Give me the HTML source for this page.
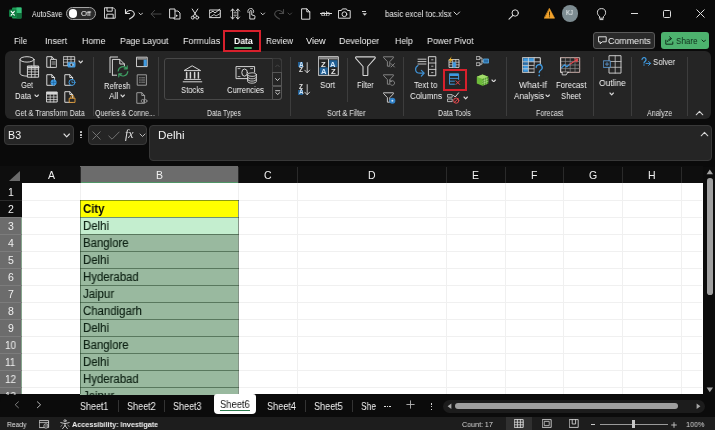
<!DOCTYPE html>
<html><head><meta charset="utf-8"><title>basic excel toc.xlsx - Excel</title>
<style>
html,body{margin:0;padding:0;background:#0a0a0a;}
body{width:715px;height:430px;position:relative;overflow:hidden;font-family:"Liberation Sans",Arial,sans-serif;}
.t{position:absolute;white-space:nowrap;display:block;transform-origin:0 50%;will-change:transform;}
.r{position:absolute;display:block;box-sizing:border-box;}
</style></head><body>
<svg class="r" style="left:9px;top:7px;" width="13" height="12" viewBox="0 0 13 12" fill="none" stroke-linecap="round" stroke-linejoin="round"><rect x="3" y="0.5" width="9.5" height="11" rx="1" fill="#1e9e57"/><rect x="7.5" y="0.5" width="5" height="5.5" fill="#35c27a"/><rect x="7.5" y="6" width="5" height="5.5" fill="#12703c"/><rect x="0" y="2.5" width="7.5" height="7.5" rx="1" fill="#107c41"/><path d="M2.2 4.3 L5.3 8.2 M5.3 4.3 L2.2 8.2" stroke="#fff" stroke-width="1.1"/></svg>
<span class="t" style="left:31.5px;top:7.9px;font-size:8.5px;line-height:12.5px;color:#f2f2f2;transform:scaleX(0.819);">AutoSave</span>
<div class="r" style="left:66px;top:6.8px;width:30.2px;height:13.4px;background:#2a2a2a;border:1.2px solid #a4a4a4;border-radius:7px;"></div>
<div class="r" style="left:68.5px;top:9.3px;width:8.4px;height:8.4px;background:#ffffff;border-radius:50%;"></div>
<span class="t" style="left:80.6px;top:7.9px;font-size:8px;line-height:12px;color:#ffffff;transform:scaleX(0.931);">Off</span>
<svg class="r" style="left:103.6px;top:7.4px;" width="12" height="12" viewBox="0 0 12 12" fill="none" stroke-linecap="round" stroke-linejoin="round"><path d="M0.8 0.8 h8.6 l1.8 1.8 v8.6 h-10.4 z" stroke="#dcdcdc" stroke-width="1"/><path d="M3 0.8 v3.4 h5.2 v-3.4 M2.8 11.2 v-4 h6.4 v4" stroke="#dcdcdc" stroke-width="1"/></svg>
<svg class="r" style="left:123.5px;top:7.5px;" width="12" height="12" viewBox="0 0 12 12" fill="none" stroke-linecap="round" stroke-linejoin="round"><path d="M1.5 1.5 v4 h4" stroke="#dcdcdc" stroke-width="1.1"/><path d="M1.8 5.2 C3.5 2.2 7.5 1.6 9.6 4 C11.6 6.4 9.5 9 5.5 11" stroke="#dcdcdc" stroke-width="1.1"/></svg>
<svg class="r" style="left:137.5px;top:11.7px;" width="5.6" height="3.8" viewBox="0 0 5.6 3.8" fill="none" stroke-linecap="round" stroke-linejoin="round"><path d="M1 1 L2.8 2.8 L4.6 1" stroke="#d0d0d0" stroke-width="1"/></svg>
<svg class="r" style="left:149.5px;top:8.5px;" width="12" height="10" viewBox="0 0 12 10" fill="none" stroke-linecap="round" stroke-linejoin="round"><path d="M11 5 H1.2 M4.6 1.4 L1.2 5 L4.6 8.6" stroke="#484848" stroke-width="1"/></svg>
<svg class="r" style="left:169px;top:7.5px;" width="12" height="12" viewBox="0 0 12 12" fill="none" stroke-linecap="round" stroke-linejoin="round"><path d="M1 1 h5 v9 h-5 z" stroke="#dcdcdc" stroke-width="1"/><path d="M6 3 h3 l2 2 v6 h-6 v-1" stroke="#dcdcdc" stroke-width="1"/><path d="M7 6.5 l2 1.3 -2 1.3z" fill="#dcdcdc"/></svg>
<svg class="r" style="left:190px;top:7.5px;" width="10" height="12" viewBox="0 0 10 12" fill="none" stroke-linecap="round" stroke-linejoin="round"><path d="M2.2 1 L6.6 8 M7.8 1 L3.4 8" stroke="#dcdcdc" stroke-width="1"/><circle cx="2.8" cy="9.6" r="1.5" stroke="#dcdcdc" stroke-width="1"/><circle cx="7.2" cy="9.6" r="1.5" stroke="#dcdcdc" stroke-width="1"/></svg>
<svg class="r" style="left:208.5px;top:8px;" width="12" height="11" viewBox="0 0 12 11" fill="none" stroke-linecap="round" stroke-linejoin="round"><rect x="0.7" y="2" width="10.6" height="7.6" stroke="#dcdcdc" stroke-width="1"/><path d="M1 5 L4 3.2 L6 5 L10.8 1.2" stroke="#dcdcdc" stroke-width="1"/><path d="M1.2 9 L5 6.5 L7 8 L11 5.6" stroke="#dcdcdc" stroke-width="0.8"/></svg>
<svg class="r" style="left:230px;top:7.5px;" width="10.5" height="12" viewBox="0 0 10.5 12" fill="none" stroke-linecap="round" stroke-linejoin="round"><path d="M2.6 1 v10 M0.8 9 l1.8 2 1.8-2 M0.8 3 l1.8-2 1.8 2" stroke="#dcdcdc" stroke-width="0.95"/><path d="M7.8 1 v10 M6 9 l1.8 2 1.8-2 M6 3 l1.8-2 1.8 2" stroke="#dcdcdc" stroke-width="0.95"/><path d="M4 4.8 h2.4 M4 7.2 h2.4" stroke="#dcdcdc" stroke-width="0.85"/></svg>
<svg class="r" style="left:245.6px;top:7.5px;" width="10" height="12" viewBox="0 0 10 12" fill="none" stroke-linecap="round" stroke-linejoin="round"><path d="M3.8 10.5 V3.6 a1 1 0 0 1 2 0 V7 l2.4 0.5 a1 1 0 0 1 0.8 1.2 l-0.4 2.3 h-4.4 z" stroke="#dcdcdc" stroke-width="1"/><path d="M2 4.6 a3 3 0 1 1 5.6 -0.2" stroke="#dcdcdc" stroke-width="0.9"/></svg>
<svg class="r" style="left:260.4px;top:11.7px;" width="5.6" height="3.8" viewBox="0 0 5.6 3.8" fill="none" stroke-linecap="round" stroke-linejoin="round"><path d="M1 1 L2.8 2.8 L4.6 1" stroke="#d0d0d0" stroke-width="1"/></svg>
<svg class="r" style="left:273px;top:7.5px;" width="12" height="12" viewBox="0 0 12 12" fill="none" stroke-linecap="round" stroke-linejoin="round"><path d="M10.5 1.5 v4 h-4" stroke="#4a4a4a" stroke-width="1.1"/><path d="M10.2 5.2 C8.5 2.2 4.5 1.6 2.4 4 C0.4 6.4 2.5 9 6.5 11" stroke="#4a4a4a" stroke-width="1.1"/></svg>
<svg class="r" style="left:287.2px;top:11.7px;" width="5.6" height="3.8" viewBox="0 0 5.6 3.8" fill="none" stroke-linecap="round" stroke-linejoin="round"><path d="M1 1 L2.8 2.8 L4.6 1" stroke="#4a4a4a" stroke-width="1"/></svg>
<svg class="r" style="left:300.6px;top:7.5px;" width="10" height="12" viewBox="0 0 10 12" fill="none" stroke-linecap="round" stroke-linejoin="round"><path d="M1 0.8 h4.8 l3 3 v7.4 h-7.8 z M5.8 0.8 v3 h3" stroke="#dcdcdc" stroke-width="1"/></svg>
<span class="t" style="left:321.0px;top:7.5px;font-size:8px;line-height:12px;color:#dcdcdc;transform:scaleX(1.012);">ab</span>
<div class="r" style="left:319.5px;top:13.2px;width:12.5px;height:1px;background:#dcdcdc;"></div>
<svg class="r" style="left:338px;top:8px;" width="13" height="11" viewBox="0 0 13 11" fill="none" stroke-linecap="round" stroke-linejoin="round"><path d="M0.8 2.5 h2.6 l1-1.6 h4 l1 1.6 h2.8 v7.7 h-11.4 z" stroke="#dcdcdc" stroke-width="1"/><circle cx="6.4" cy="6.2" r="2.4" stroke="#dcdcdc" stroke-width="1"/></svg>
<div class="r" style="left:361.8px;top:11.2px;width:4.6px;height:1px;background:#d0d0d0;"></div>
<svg class="r" style="left:361.5px;top:13.2px;" width="6" height="3.2" viewBox="0 0 6 3.2" fill="none" stroke-linecap="round" stroke-linejoin="round"><path d="M0.4 0.2 h4.6 l-2.3 2.6z" fill="#d0d0d0"/></svg>
<span class="t" style="left:384.5px;top:7.9px;font-size:8.8px;line-height:12.8px;color:#efefef;transform:scaleX(0.883);">basic excel toc.xlsx</span>
<svg class="r" style="left:453.4px;top:11.4px;" width="7.6" height="4.8" viewBox="0 0 7.6 4.8" fill="none" stroke-linecap="round" stroke-linejoin="round"><path d="M1 1 L3.8 3.8 L6.6 1" stroke="#d8d8d8" stroke-width="1"/></svg>
<svg class="r" style="left:507.5px;top:8.5px;" width="12" height="11" viewBox="0 0 12 11" fill="none" stroke-linecap="round" stroke-linejoin="round"><circle cx="7.2" cy="4" r="3.2" stroke="#dcdcdc" stroke-width="1"/><path d="M4.9 6.4 L1 10.2" stroke="#dcdcdc" stroke-width="1.1"/></svg>
<svg class="r" style="left:543.5px;top:8px;" width="11" height="11" viewBox="0 0 11 11" fill="none" stroke-linecap="round" stroke-linejoin="round"><path d="M5.5 0.6 L10.6 10.2 H0.4 Z" fill="#f2a22b" stroke="#f2a22b" stroke-width="0.6"/><path d="M5.5 4 v3.2" stroke="#3a2a00" stroke-width="1"/><circle cx="5.5" cy="8.7" r="0.55" fill="#3a2a00"/></svg>
<div class="r" style="left:561.5px;top:5.3px;width:16.5px;height:16.5px;background:#7d8c91;border-radius:50%;"></div>
<span class="t" style="left:566.4px;top:8.4px;font-size:6.8px;line-height:10.8px;color:#f4f8f8;transform:scaleX(0.882);">KJ</span>
<svg class="r" style="left:596px;top:7.5px;" width="11" height="13" viewBox="0 0 11 13" fill="none" stroke-linecap="round" stroke-linejoin="round"><path d="M3.6 8.6 C2.2 7.4 1.4 6.2 1.4 4.7 a4.1 4.1 0 0 1 8.2 0 C9.6 6.2 8.8 7.4 7.4 8.6 v1.6 h-3.8 z M4 11.6 h3" stroke="#dcdcdc" stroke-width="1"/></svg>
<div class="r" style="left:630.5px;top:13px;width:7.5px;height:1px;background:#dcdcdc;"></div>
<div class="r" style="left:663px;top:9.8px;width:8px;height:8px;background:transparent;border:1px solid #dcdcdc;border-radius:1.5px;"></div>
<svg class="r" style="left:695.5px;top:9.3px;" width="9" height="9" viewBox="0 0 9 9" fill="none" stroke-linecap="round" stroke-linejoin="round"><path d="M0.8 0.8 L8.2 8.2 M8.2 0.8 L0.8 8.2" stroke="#dcdcdc" stroke-width="1"/></svg>
<span class="t" style="left:14.0px;top:35.1px;font-size:9.2px;line-height:13.2px;color:#f2f2f2;transform:scaleX(0.890);">File</span>
<span class="t" style="left:45.3px;top:35.1px;font-size:9.2px;line-height:13.2px;color:#f2f2f2;transform:scaleX(0.965);">Insert</span>
<span class="t" style="left:82.4px;top:35.1px;font-size:9.2px;line-height:13.2px;color:#f2f2f2;transform:scaleX(0.954);">Home</span>
<span class="t" style="left:120.4px;top:35.1px;font-size:9.2px;line-height:13.2px;color:#f2f2f2;transform:scaleX(0.937);">Page Layout</span>
<span class="t" style="left:183.0px;top:35.1px;font-size:9.2px;line-height:13.2px;color:#f2f2f2;transform:scaleX(0.973);">Formulas</span>
<span class="t" style="left:233.7px;top:35.1px;font-size:9.2px;line-height:13.2px;color:#ffffff;transform:scaleX(0.943);font-weight:bold;">Data</span>
<div class="r" style="left:233.7px;top:47.3px;width:18.8px;height:1.4px;background:#4db26e;border-radius:1px;"></div>
<span class="t" style="left:265.6px;top:35.1px;font-size:9.2px;line-height:13.2px;color:#f2f2f2;transform:scaleX(0.895);">Review</span>
<span class="t" style="left:306.0px;top:35.1px;font-size:9.2px;line-height:13.2px;color:#f2f2f2;transform:scaleX(0.991);">View</span>
<span class="t" style="left:339.2px;top:35.1px;font-size:9.2px;line-height:13.2px;color:#f2f2f2;transform:scaleX(0.963);">Developer</span>
<span class="t" style="left:394.5px;top:35.1px;font-size:9.2px;line-height:13.2px;color:#f2f2f2;transform:scaleX(0.946);">Help</span>
<span class="t" style="left:426.7px;top:35.1px;font-size:9.2px;line-height:13.2px;color:#f2f2f2;transform:scaleX(0.951);">Power Pivot</span>
<div class="r" style="left:593.4px;top:31.8px;width:61.6px;height:17px;background:#2a2a2a;border:1px solid #5a5a5a;border-radius:3px;"></div>
<svg class="r" style="left:597.5px;top:36px;" width="9" height="9" viewBox="0 0 9 9" fill="none" stroke-linecap="round" stroke-linejoin="round"><path d="M0.8 0.8 h7.4 v5 h-4 l-2 2 v-2 h-1.4 z" stroke="#e0e0e0" stroke-width="1"/></svg>
<span class="t" style="left:608.2px;top:34.8px;font-size:9.2px;line-height:13.2px;color:#f2f2f2;transform:scaleX(0.962);">Comments</span>
<div class="r" style="left:660.7px;top:31.8px;width:48.3px;height:17px;background:#4db26e;border-radius:3px;"></div>
<svg class="r" style="left:664.5px;top:35.5px;" width="9" height="9" viewBox="0 0 9 9" fill="none" stroke-linecap="round" stroke-linejoin="round"><path d="M0.8 4.2 v4 h7 v-2.2" stroke="#10301c" stroke-width="1"/><path d="M2.6 5.6 C3 3.4 4.6 2.6 6 2.6 M4.6 0.8 L6.6 2.6 L4.6 4.4" stroke="#10301c" stroke-width="1"/></svg>
<span class="t" style="left:675.8px;top:34.8px;font-size:9.2px;line-height:13.2px;color:#0f2a19;transform:scaleX(0.876);">Share</span>
<svg class="r" style="left:700.7px;top:38.9px;" width="5.6" height="3.8" viewBox="0 0 5.6 3.8" fill="none" stroke-linecap="round" stroke-linejoin="round"><path d="M1 1 L2.8 2.8 L4.6 1" stroke="#0f2a19" stroke-width="1"/></svg>
<div class="r" style="left:4.6px;top:51px;width:706px;height:68.4px;background:#252525;border-radius:6px;"></div>
<div class="r" style="left:223.3px;top:30px;width:38px;height:22px;background:transparent;border:2px solid #d7202c;"></div>
<div class="r" style="left:93.2px;top:57px;width:1px;height:59px;background:#3d3d3d;"></div>
<div class="r" style="left:158px;top:57px;width:1px;height:59px;background:#3d3d3d;"></div>
<div class="r" style="left:289.8px;top:57px;width:1px;height:59px;background:#3d3d3d;"></div>
<div class="r" style="left:402.7px;top:57px;width:1px;height:59px;background:#3d3d3d;"></div>
<div class="r" style="left:505.8px;top:57px;width:1px;height:59px;background:#3d3d3d;"></div>
<div class="r" style="left:593.4px;top:57px;width:1px;height:59px;background:#3d3d3d;"></div>
<div class="r" style="left:631.2px;top:57px;width:1px;height:59px;background:#3d3d3d;"></div>
<div class="r" style="left:687.4px;top:57px;width:1px;height:59px;background:#3d3d3d;"></div>
<div class="r" style="left:346.7px;top:58px;width:1px;height:44px;background:#3d3d3d;"></div>
<span class="t" style="left:14.6px;top:107.0px;font-size:8.5px;line-height:12.5px;color:#e2e2e2;transform:scaleX(0.844);">Get &amp; Transform Data</span>
<span class="t" style="left:95.2px;top:107.0px;font-size:8.5px;line-height:12.5px;color:#e2e2e2;transform:scaleX(0.827);">Queries &amp; Conne...</span>
<span class="t" style="left:206.7px;top:107.0px;font-size:8.5px;line-height:12.5px;color:#e2e2e2;transform:scaleX(0.794);">Data Types</span>
<span class="t" style="left:326.6px;top:107.0px;font-size:8.5px;line-height:12.5px;color:#e2e2e2;transform:scaleX(0.858);">Sort &amp; Filter</span>
<span class="t" style="left:437.8px;top:107.0px;font-size:8.5px;line-height:12.5px;color:#e2e2e2;transform:scaleX(0.817);">Data Tools</span>
<span class="t" style="left:536.0px;top:107.0px;font-size:8.5px;line-height:12.5px;color:#e2e2e2;transform:scaleX(0.823);">Forecast</span>
<span class="t" style="left:646.6px;top:107.0px;font-size:8.5px;line-height:12.5px;color:#e2e2e2;transform:scaleX(0.833);">Analyze</span>
<svg class="r" style="left:695px;top:109.6px;" width="9" height="6" viewBox="0 0 9 6" fill="none" stroke-linecap="round" stroke-linejoin="round"><path d="M1.2 4.8 L4.5 1.4 L7.8 4.8" stroke="#d4d4d4" stroke-width="1.05"/></svg>
<svg class="r" style="left:18.6px;top:56px;" width="21" height="22.4" viewBox="0 0 21 22.4" fill="none" stroke-linecap="round" stroke-linejoin="round"><ellipse cx="8" cy="3.4" rx="7" ry="2.7" stroke="#d6d6d6" stroke-width="1"/><path d="M1 3.4 v14 c0 1.5 3 2.7 7 2.7 M15 3.4 v6.2" stroke="#d6d6d6" stroke-width="1"/><rect x="8.8" y="10" width="10.8" height="11.2" fill="#252525" stroke="#d6d6d6" stroke-width="1"/><path d="M8.8 13.2 h10.8 M8.8 15.9 h10.8 M8.8 18.6 h10.8 M12.4 10 v11.2 M16 10 v11.2" stroke="#d6d6d6" stroke-width="0.8"/><path d="M8.8 11.4 h10.8" stroke="#d6d6d6" stroke-width="1.6"/></svg>
<span class="t" style="left:20.6px;top:79.0px;font-size:9.2px;line-height:13.2px;color:#f2f2f2;transform:scaleX(0.809);">Get</span>
<span class="t" style="left:15.2px;top:89.9px;font-size:9.2px;line-height:13.2px;color:#f2f2f2;transform:scaleX(0.829);">Data</span>
<svg class="r" style="left:33.599999999999994px;top:93.69999999999999px;" width="5.4" height="3.8" viewBox="0 0 5.4 3.8" fill="none" stroke-linecap="round" stroke-linejoin="round"><path d="M1 1 L2.7 2.8 L4.4 1" stroke="#d8d8d8" stroke-width="1.15"/></svg>
<svg class="r" style="left:46px;top:56.4px;" width="12" height="12" viewBox="0 0 12 12" fill="none" stroke-linecap="round" stroke-linejoin="round"><path d="M1.2 0.7 h4.6 l2.8 2.8 v7.8 h-7.4 z M5.8 0.7 v2.8 h2.8" stroke="#d6d6d6" stroke-width="1"/><path d="M4.8 3.4 h5.6 v8 h-5.6z" fill="#252525" stroke="#d6d6d6" stroke-width="0.9"/><path d="M6 6 h3.2 M6 8 h3.2 " stroke="#d6d6d6" stroke-width="0.7"/></svg>
<svg class="r" style="left:46px;top:74.2px;" width="12" height="12" viewBox="0 0 12 12" fill="none" stroke-linecap="round" stroke-linejoin="round"><path d="M1.2 0.7 h4.6 l2.8 2.8 v7.8 h-7.4 z M5.8 0.7 v2.8 h2.8" stroke="#d6d6d6" stroke-width="1"/><circle cx="7.6" cy="8.4" r="3" fill="#3f9ae0"/><path d="M4.8 8.4 h5.6 M7.6 5.6 v5.6" stroke="#1b5d94" stroke-width="0.6"/></svg>
<svg class="r" style="left:45.6px;top:91.4px;" width="12" height="12" viewBox="0 0 12 12" fill="none" stroke-linecap="round" stroke-linejoin="round"><rect x="0.8" y="1" width="10.4" height="10" stroke="#d6d6d6" stroke-width="1"/><rect x="0.8" y="1" width="10.4" height="2.6" fill="#d6d6d6"/><path d="M0.8 6 h10.4 M0.8 8.6 h10.4 M4.2 3.6 v7.4 M7.8 3.6 v7.4" stroke="#d6d6d6" stroke-width="0.8"/></svg>
<svg class="r" style="left:63px;top:56.4px;" width="13" height="12" viewBox="0 0 13 12" fill="none" stroke-linecap="round" stroke-linejoin="round"><rect x="0.7" y="0.7" width="11" height="9" stroke="#d6d6d6" stroke-width="0.9"/><path d="M0.7 3.4 h11 M0.7 6.2 h11 M4.4 0.7 v9 M8 0.7 v9" stroke="#d6d6d6" stroke-width="0.7"/><rect x="4.6" y="6.2" width="7.8" height="5.2" rx="0.8" fill="#3f9ae0"/><circle cx="8.5" cy="8.8" r="1.5" fill="#252525" stroke="#cfe6fa" stroke-width="0.6"/></svg>
<svg class="r" style="left:77.5px;top:60.1px;" width="5.4" height="3.8" viewBox="0 0 5.4 3.8" fill="none" stroke-linecap="round" stroke-linejoin="round"><path d="M1 1 L2.7 2.8 L4.4 1" stroke="#d8d8d8" stroke-width="1.15"/></svg>
<svg class="r" style="left:63.6px;top:74.2px;" width="12" height="12" viewBox="0 0 12 12" fill="none" stroke-linecap="round" stroke-linejoin="round"><path d="M1.2 0.7 h4.6 l2.8 2.8 v7.8 h-7.4 z M5.8 0.7 v2.8 h2.8" stroke="#d6d6d6" stroke-width="1"/><circle cx="8" cy="8.4" r="3" fill="#252525" stroke="#3f9ae0" stroke-width="1"/><path d="M8 6.8 v1.8 h1.4" stroke="#3f9ae0" stroke-width="0.8"/></svg>
<svg class="r" style="left:63.6px;top:91.4px;" width="12" height="12" viewBox="0 0 12 12" fill="none" stroke-linecap="round" stroke-linejoin="round"><path d="M1.2 0.7 h4.6 l2.8 2.8 v7.8 h-7.4 z M5.8 0.7 v2.8 h2.8" stroke="#d6d6d6" stroke-width="1"/><rect x="5.6" y="7.2" width="5.4" height="4.2" fill="#252525" stroke="#e6a23c" stroke-width="0.9"/><path d="M6.8 7.2 v-1.4 a1.5 1.5 0 0 1 3 0 v1.4" stroke="#e6a23c" stroke-width="0.9"/></svg>
<svg class="r" style="left:108.8px;top:56px;" width="21" height="23" viewBox="0 0 21 23" fill="none" stroke-linecap="round" stroke-linejoin="round"><path d="M1 16.6 V1 h7.6" stroke="#d6d6d6" stroke-width="1"/><path d="M3.4 19.2 V3.4 h7.4 l4.6 4.6 v2 M10.8 3.4 v4.6 h4.6 M3.4 19.2 h4.2" stroke="#d6d6d6" stroke-width="1"/><path d="M9.2 15 a4.9 4.9 0 0 1 8.6 -2.6 M18.2 9.8 v3 h-3" stroke="#3f9f64" stroke-width="1.15"/><path d="M18.8 15.6 a4.9 4.9 0 0 1 -8.6 2.6 M9.8 20.8 v-3 h3" stroke="#3f9f64" stroke-width="1.15"/></svg>
<span class="t" style="left:103.8px;top:79.6px;font-size:9.2px;line-height:13.2px;color:#f2f2f2;transform:scaleX(0.820);">Refresh</span>
<span class="t" style="left:109.0px;top:89.9px;font-size:9.2px;line-height:13.2px;color:#f2f2f2;transform:scaleX(0.900);">All</span>
<svg class="r" style="left:119.8px;top:93.89999999999999px;" width="5.4" height="3.8" viewBox="0 0 5.4 3.8" fill="none" stroke-linecap="round" stroke-linejoin="round"><path d="M1 1 L2.7 2.8 L4.4 1" stroke="#d8d8d8" stroke-width="1.15"/></svg>
<svg class="r" style="left:136px;top:56.2px;" width="12" height="12" viewBox="0 0 12 12" fill="none" stroke-linecap="round" stroke-linejoin="round"><rect x="0.8" y="1.2" width="10.4" height="9.4" stroke="#d6d6d6" stroke-width="1"/><rect x="1.3" y="1.7" width="9.4" height="2" fill="#8a8a8a"/><rect x="7.6" y="3.7" width="3.1" height="6.4" fill="#3f9ae0"/></svg>
<svg class="r" style="left:136px;top:74.2px;" width="12" height="12" viewBox="0 0 12 12" fill="none" stroke-linecap="round" stroke-linejoin="round"><rect x="1.6" y="0.8" width="8.8" height="10.4" stroke="#9a9a9a" stroke-width="1"/><path d="M3.4 3.8 h1 M5.6 3.8 h3 M3.4 6 h1 M5.6 6 h3 M3.4 8.2 h1 M5.6 8.2 h3" stroke="#9a9a9a" stroke-width="0.8"/></svg>
<svg class="r" style="left:136px;top:92px;" width="12" height="12" viewBox="0 0 12 12" fill="none" stroke-linecap="round" stroke-linejoin="round"><path d="M1.2 0.7 h4.6 l2.8 2.8 v7.8 h-7.4 z M5.8 0.7 v2.8 h2.8" stroke="#9a9a9a" stroke-width="1"/><circle cx="6.8" cy="9" r="1.6" stroke="#9a9a9a" stroke-width="0.8" fill="#252525"/><circle cx="9.4" cy="9" r="1.6" stroke="#9a9a9a" stroke-width="0.8" fill="none"/></svg>
<div class="r" style="left:164.3px;top:58.2px;width:118.2px;height:41.5px;background:transparent;border:1px solid #484848;border-radius:3px;"></div>
<div class="r" style="left:272.4px;top:58.2px;width:10.1px;height:14.4px;background:transparent;border:1px solid #3a3a3a;border-radius:0 3px 0 0;"></div>
<div class="r" style="left:272.4px;top:72.4px;width:10.1px;height:14px;background:transparent;border:1px solid #555;"></div>
<div class="r" style="left:272.4px;top:85.9px;width:10.1px;height:13.8px;background:transparent;border:1px solid #555;border-radius:0 0 3px 0;"></div>
<svg class="r" style="left:275.4px;top:64px;" width="5" height="3.4" viewBox="0 0 5 3.4" fill="none" stroke-linecap="round" stroke-linejoin="round"><path d="M0.6 2.8 L2.5 0.8 L4.4 2.8" stroke="#4a4a4a" stroke-width="0.9"/></svg>
<svg class="r" style="left:275.4px;top:77.8px;" width="5" height="3.4" viewBox="0 0 5 3.4" fill="none" stroke-linecap="round" stroke-linejoin="round"><path d="M0.6 0.6 L2.5 2.6 L4.4 0.6" stroke="#dcdcdc" stroke-width="0.9"/></svg>
<svg class="r" style="left:275.2px;top:90px;" width="5.4" height="6" viewBox="0 0 5.4 6" fill="none" stroke-linecap="round" stroke-linejoin="round"><path d="M0.6 0.7 h4.2" stroke="#dcdcdc" stroke-width="0.9"/><path d="M0.8 2.6 L2.7 4.6 L4.6 2.6" stroke="#dcdcdc" stroke-width="0.9"/></svg>
<svg class="r" style="left:181.5px;top:65px;" width="21" height="18" viewBox="0 0 21 18" fill="none" stroke-linecap="round" stroke-linejoin="round"><path d="M10.5 1 L18.6 5.6 H2.4 Z" stroke="#d6d6d6" stroke-width="1"/><path d="M4.6 7.4 v5.6 M8.4 7.4 v5.6 M12.6 7.4 v5.6 M16.4 7.4 v5.6" stroke="#d6d6d6" stroke-width="1.5"/><path d="M2.6 14.4 h15.8 M1.2 16.8 h18.6" stroke="#d6d6d6" stroke-width="1"/></svg>
<span class="t" style="left:180.7px;top:84.2px;font-size:9.2px;line-height:13.2px;color:#f2f2f2;transform:scaleX(0.829);">Stocks</span>
<svg class="r" style="left:235px;top:64.5px;" width="23" height="19" viewBox="0 0 23 19" fill="none" stroke-linecap="round" stroke-linejoin="round"><path d="M12.4 13.6 H1 V1.6 h18.6 v5.4" stroke="#d6d6d6" stroke-width="1"/><ellipse cx="9.6" cy="7.6" rx="2.8" ry="3.6" stroke="#d6d6d6" stroke-width="1"/><path d="M3 3.6 h2 M3 11.6 h2 M15.6 3.6 h2" stroke="#d6d6d6" stroke-width="0.8"/><ellipse cx="17" cy="9.6" rx="4.4" ry="1.8" fill="#252525" stroke="#d6d6d6" stroke-width="0.9"/><path d="M12.6 9.6 v6.8 c0 1 2 1.8 4.4 1.8 s4.4-.8 4.4-1.8 v-6.8 M12.6 12 c0 1 2 1.8 4.4 1.8 s4.4-.8 4.4-1.8 M12.6 14.3 c0 1 2 1.8 4.4 1.8 s4.4-.8 4.4-1.8" stroke="#d6d6d6" stroke-width="0.9"/></svg>
<span class="t" style="left:226.8px;top:84.2px;font-size:9.2px;line-height:13.2px;color:#f2f2f2;transform:scaleX(0.832);">Currencies</span>
<div class="r" style="left:298.3px;top:62.0px;width:5.2px;height:5.4px;background:#215f94;"></div>
<span class="t" style="left:298.8px;top:59.7px;font-size:6.4px;line-height:10.4px;color:#d4e8fa;font-weight:bold;">A</span>
<span class="t" style="left:299.0px;top:65.4px;font-size:6.4px;line-height:10.4px;color:#e6e6e6;font-weight:bold;">Z</span>
<svg class="r" style="left:304.3px;top:61.8px;" width="6.4" height="11.6" viewBox="0 0 6.4 11.6" fill="none" stroke-linecap="round" stroke-linejoin="round"><path d="M3.2 0.6 v10 M0.8 8.2 L3.2 10.8 L5.6 8.2" stroke="#d6d6d6" stroke-width="0.9"/></svg>
<span class="t" style="left:299.0px;top:81.5px;font-size:6.4px;line-height:10.4px;color:#e6e6e6;font-weight:bold;">Z</span>
<div class="r" style="left:298.3px;top:89.5px;width:5.2px;height:5.4px;background:#215f94;"></div>
<span class="t" style="left:298.8px;top:87.2px;font-size:6.4px;line-height:10.4px;color:#d4e8fa;font-weight:bold;">A</span>
<svg class="r" style="left:304.3px;top:83.6px;" width="6.4" height="11.6" viewBox="0 0 6.4 11.6" fill="none" stroke-linecap="round" stroke-linejoin="round"><path d="M3.2 0.6 v10 M0.8 8.2 L3.2 10.8 L5.6 8.2" stroke="#d6d6d6" stroke-width="0.9"/></svg>
<svg class="r" style="left:317.6px;top:56.3px;" width="21" height="20" viewBox="0 0 21 20" fill="none" stroke-linecap="round" stroke-linejoin="round"><rect x="0.7" y="0.7" width="19.6" height="18.6" stroke="#d6d6d6" stroke-width="1"/><rect x="1.2" y="1.2" width="18.6" height="2.2" fill="#8c8c8c"/><rect x="1.6" y="11.4" width="8.2" height="7.2" fill="#215f94"/><rect x="11.2" y="4.2" width="8.2" height="7" fill="#215f94"/><path d="M10.5 3.4 v15.9" stroke="#d6d6d6" stroke-width="1"/></svg>
<span class="t" style="left:321.2px;top:58.6px;font-size:7.6px;line-height:11.6px;color:#e6e6e6;font-weight:bold;">Z</span>
<span class="t" style="left:320.6px;top:65.8px;font-size:7.6px;line-height:11.6px;color:#d4e8fa;font-weight:bold;">A</span>
<span class="t" style="left:330.2px;top:58.6px;font-size:7.6px;line-height:11.6px;color:#d4e8fa;font-weight:bold;">A</span>
<span class="t" style="left:330.8px;top:65.8px;font-size:7.6px;line-height:11.6px;color:#e6e6e6;font-weight:bold;">Z</span>
<span class="t" style="left:320.3px;top:79.0px;font-size:9.2px;line-height:13.2px;color:#f2f2f2;transform:scaleX(0.895);">Sort</span>
<svg class="r" style="left:354.6px;top:56.2px;" width="21" height="21" viewBox="0 0 21 21" fill="none" stroke-linecap="round" stroke-linejoin="round"><path d="M1.4 0.9 h18 a0.8 0.8 0 0 1 0.6 1.4 l-7.2 8.2 v8.4 a0.6 0.6 0 0 1 -0.6 0.6 h-3.6 a0.6 0.6 0 0 1 -0.6 -0.6 v-8.4 L0.8 2.3 a0.8 0.8 0 0 1 0.6 -1.4 z" stroke="#d6d6d6" stroke-width="1.1"/></svg>
<span class="t" style="left:356.9px;top:79.0px;font-size:9.2px;line-height:13.2px;color:#f2f2f2;transform:scaleX(0.817);">Filter</span>
<svg class="r" style="left:383px;top:56.2px;" width="13" height="12" viewBox="0 0 13 12" fill="none" stroke-linecap="round" stroke-linejoin="round"><path d="M0.8 0.8 h9.6 v1 l-3.6 3.8 v4.6 h-2.4 v-4.6 L0.8 1.8 z" stroke="#8e8e8e" stroke-width="0.9"/><path d="M8 7.6 l3.4 3.4 M11.4 7.6 l-3.4 3.4" stroke="#8e8e8e" stroke-width="0.9"/></svg>
<svg class="r" style="left:383px;top:74.2px;" width="13" height="12" viewBox="0 0 13 12" fill="none" stroke-linecap="round" stroke-linejoin="round"><path d="M0.8 0.8 h9.6 v1 l-3.6 3.8 v4.6 h-2.4 v-4.6 L0.8 1.8 z" stroke="#8e8e8e" stroke-width="0.9"/><path d="M7.6 10.8 a2.4 2.4 0 1 0 0 -3.6 M7.2 5.8 v1.6 h1.6" stroke="#8e8e8e" stroke-width="0.8"/></svg>
<svg class="r" style="left:383px;top:92px;" width="13" height="12" viewBox="0 0 13 12" fill="none" stroke-linecap="round" stroke-linejoin="round"><path d="M0.8 0.8 h9.6 v1 l-3.6 3.8 v4.6 h-2.4 v-4.6 L0.8 1.8 z" stroke="#d6d6d6" stroke-width="0.9"/><circle cx="9.4" cy="8.8" r="3" fill="#2f80c8"/><circle cx="9.4" cy="8.8" r="1" fill="#cfe4f7"/></svg>
<svg class="r" style="left:413.5px;top:56px;" width="23" height="21" viewBox="0 0 23 21" fill="none" stroke-linecap="round" stroke-linejoin="round"><path d="M4 3.2 h8 M4 5.6 h8 M4 8 h8" stroke="#d6d6d6" stroke-width="0.9"/><rect x="14.8" y="0.7" width="7" height="19" stroke="#d6d6d6" stroke-width="1"/><path d="M14.8 7 h7 M14.8 13.4 h7" stroke="#d6d6d6" stroke-width="0.9"/><path d="M17.6 3.8 h1.4 M17.6 10.2 h1.4 M17.6 16.6 h1.4" stroke="#d6d6d6" stroke-width="0.8"/><path d="M4 9.6 C0.4 11.6 0.6 17.2 6 17.2 h3.6 M7.4 14.4 l2.8 2.8 -2.8 2.8" stroke="#3f8fd0" stroke-width="1.2"/></svg>
<span class="t" style="left:413.9px;top:79.0px;font-size:9.2px;line-height:13.2px;color:#f2f2f2;transform:scaleX(0.863);">Text to</span>
<span class="t" style="left:409.6px;top:89.9px;font-size:9.2px;line-height:13.2px;color:#f2f2f2;transform:scaleX(0.882);">Columns</span>
<svg class="r" style="left:447px;top:56px;" width="13" height="12" viewBox="0 0 13 12" fill="none" stroke-linecap="round" stroke-linejoin="round"><rect x="2.4" y="3.6" width="9.6" height="7.8" stroke="#d6d6d6" stroke-width="0.9"/><path d="M2.4 6.2 h9.6 M2.4 8.8 h9.6 M5.6 3.6 v7.8 M8.8 3.6 v7.8" stroke="#d6d6d6" stroke-width="0.7"/><rect x="5.6" y="6.2" width="3.2" height="5.2" fill="#3f9ae0"/><path d="M4.6 0.2 L1.6 4.4 h2 L2.6 7.4 L6 3 h-2.2 z" fill="#f0b429"/></svg>
<svg class="r" style="left:448.6px;top:73.4px;" width="12" height="12.5" viewBox="0 0 12 12.5" fill="none" stroke-linecap="round" stroke-linejoin="round"><rect x="0.8" y="0.8" width="8.8" height="10.4" stroke="#3f9ae0" stroke-width="1"/><rect x="1" y="1" width="8.4" height="2" fill="#3f9ae0"/><path d="M0.8 5.4 h8.8 M0.8 8.2 h5" stroke="#3f9ae0" stroke-width="0.9"/><rect x="5.8" y="6.8" width="6" height="5.6" fill="#252525"/><path d="M7 7.8 l3.6 3.6 M10.6 7.8 l-3.6 3.6" stroke="#e5484d" stroke-width="1"/></svg>
<div class="r" style="left:442.8px;top:69.4px;width:24.7px;height:22px;background:transparent;border:2px solid #d7202c;"></div>
<svg class="r" style="left:447px;top:92px;" width="13" height="12" viewBox="0 0 13 12" fill="none" stroke-linecap="round" stroke-linejoin="round"><rect x="0.8" y="2.6" width="4.4" height="2.6" stroke="#d6d6d6" stroke-width="0.8"/><rect x="0.8" y="7" width="4.4" height="2.6" stroke="#d6d6d6" stroke-width="0.8"/><path d="M6.6 3.4 l1.6 1.6 L11.6 0.8" stroke="#d6d6d6" stroke-width="1"/><circle cx="9.2" cy="8.6" r="2.6" stroke="#e5484d" stroke-width="1"/><path d="M7.4 10.4 l3.6 -3.6" stroke="#e5484d" stroke-width="1"/></svg>
<svg class="r" style="left:463.3px;top:96.3px;" width="5.4" height="3.8" viewBox="0 0 5.4 3.8" fill="none" stroke-linecap="round" stroke-linejoin="round"><path d="M1 1 L2.7 2.8 L4.4 1" stroke="#d8d8d8" stroke-width="1.15"/></svg>
<svg class="r" style="left:475.5px;top:56px;" width="13" height="10.5" viewBox="0 0 13 10.5" fill="none" stroke-linecap="round" stroke-linejoin="round"><rect x="0.6" y="0.6" width="3.4" height="2.8" stroke="#d6d6d6" stroke-width="0.8"/><rect x="0.6" y="6.8" width="3.4" height="2.8" stroke="#d6d6d6" stroke-width="0.8"/><path d="M4 2 h2 v6.2 h-2 M6 5.1 h1.6" stroke="#d6d6d6" stroke-width="0.8"/><rect x="7.8" y="3" width="4.8" height="4" fill="#2b6ea8" stroke="#5ab0e8" stroke-width="0.8"/></svg>
<svg class="r" style="left:475.6px;top:73.6px;" width="13" height="12.4" viewBox="0 0 13 12.4" fill="none" stroke-linecap="round" stroke-linejoin="round"><path d="M6.5 0.6 L12.2 2.8 V9.4 L6.5 11.8 L0.8 9.4 V2.8 Z" fill="#6dbb3a"/><path d="M6.5 0.6 L12.2 2.8 L6.5 5 L0.8 2.8 Z" fill="#a4dc6c"/><path d="M6.5 5 V11.8 L12.2 9.4 V2.8 Z" fill="#4f9a28"/><path d="M8.4 4.4 v6.4 M10.3 3.6 v6.4 M6.5 7.2 l5.7 -2.2 M6.5 9.4 l5.7 -2.2" stroke="#c9efa4" stroke-width="0.5"/></svg>
<svg class="r" style="left:491.0px;top:78.5px;" width="5.4" height="3.8" viewBox="0 0 5.4 3.8" fill="none" stroke-linecap="round" stroke-linejoin="round"><path d="M1 1 L2.7 2.8 L4.4 1" stroke="#d8d8d8" stroke-width="1.15"/></svg>
<svg class="r" style="left:522px;top:57.3px;" width="22" height="20" viewBox="0 0 22 20" fill="none" stroke-linecap="round" stroke-linejoin="round"><rect x="0.7" y="0.7" width="17.6" height="14.6" stroke="#d6d6d6" stroke-width="1"/><rect x="1.2" y="1.2" width="11" height="3.6" fill="#3f9ae0"/><rect x="1.2" y="4.8" width="5.2" height="3.6" fill="#2b6ea8"/><rect x="1.2" y="8.4" width="5.2" height="6.4" fill="#3f9ae0"/><path d="M0.7 4.8 h17.6 M0.7 8.4 h17.6 M0.7 11.8 h17.6 M6.4 0.7 v14.6 M12.2 0.7 v14.6" stroke="#d6d6d6" stroke-width="0.8"/><rect x="12.6" y="7.4" width="9" height="12.4" fill="#252525"/><path d="M14.2 10.6 a3 3 0 1 1 4.4 2.6 c-1 .6 -1.4 1.2 -1.4 2.4" stroke="#3f9ae0" stroke-width="1.3"/><circle cx="17.2" cy="18.4" r="0.9" fill="#3f9ae0"/></svg>
<span class="t" style="left:518.9px;top:79.0px;font-size:9.2px;line-height:13.2px;color:#f2f2f2;transform:scaleX(0.944);">What-If</span>
<span class="t" style="left:513.9px;top:89.9px;font-size:9.2px;line-height:13.2px;color:#f2f2f2;transform:scaleX(0.879);">Analysis</span>
<svg class="r" style="left:545.3px;top:93.69999999999999px;" width="5.4" height="3.8" viewBox="0 0 5.4 3.8" fill="none" stroke-linecap="round" stroke-linejoin="round"><path d="M1 1 L2.7 2.8 L4.4 1" stroke="#d8d8d8" stroke-width="1.15"/></svg>
<svg class="r" style="left:560.4px;top:57px;" width="21" height="20" viewBox="0 0 21 20" fill="none" stroke-linecap="round" stroke-linejoin="round"><rect x="0.7" y="0.7" width="19" height="14.6" stroke="#cdb0aa" stroke-width="1"/><path d="M0.7 4.4 h19 M0.7 8 h19 M0.7 11.6 h19 M5.4 0.7 v14.6 M10.2 0.7 v14.6 M15 0.7 v14.6" stroke="#8e8e8e" stroke-width="0.7"/><path d="M0.7 1 v14.3 h8" stroke="#d6d6d6" stroke-width="1"/><path d="M2.2 15.3 v2.6 h4 l1.6-2.6" stroke="#d6d6d6" stroke-width="0.9" fill="#252525"/><path d="M1.6 10.6 l3 -2.8 2.2 2 3 -2.6" stroke="#3f9ae0" stroke-width="1.2"/><path d="M9.8 7.2 L17.6 2.2 M14.6 1.8 L17.8 2 L16.8 5" stroke="#e5484d" stroke-width="1.1"/></svg>
<span class="t" style="left:555.7px;top:79.0px;font-size:9.2px;line-height:13.2px;color:#f2f2f2;transform:scaleX(0.849);">Forecast</span>
<span class="t" style="left:561.0px;top:89.9px;font-size:9.2px;line-height:13.2px;color:#f2f2f2;transform:scaleX(0.832);">Sheet</span>
<svg class="r" style="left:602.6px;top:55.2px;" width="19" height="19" viewBox="0 0 19 19" fill="none" stroke-linecap="round" stroke-linejoin="round"><rect x="6.4" y="0.7" width="11.6" height="17.4" stroke="#c8c8c8" stroke-width="1"/><path d="M12.2 0.7 v17.4 M6.4 6.5 h11.6 M6.4 12.3 h11.6" stroke="#c8c8c8" stroke-width="0.8"/><rect x="0.7" y="5.8" width="6.6" height="6.6" fill="#252525" stroke="#5b9bd5" stroke-width="0.9"/><path d="M2.4 9.1 h3.2 M4 7.5 v3.2" stroke="#5b9bd5" stroke-width="0.8"/></svg>
<span class="t" style="left:598.5px;top:76.8px;font-size:9.2px;line-height:13.2px;color:#f2f2f2;transform:scaleX(0.916);">Outline</span>
<svg class="r" style="left:609.0999999999999px;top:92.3px;" width="5.4" height="3.8" viewBox="0 0 5.4 3.8" fill="none" stroke-linecap="round" stroke-linejoin="round"><path d="M1 1 L2.7 2.8 L4.4 1" stroke="#d8d8d8" stroke-width="1.15"/></svg>
<svg class="r" style="left:640.5px;top:57.3px;" width="11" height="9.2" viewBox="0 0 11 9.2" fill="none" stroke-linecap="round" stroke-linejoin="round"><path d="M1 2.6 a2 2 0 1 1 3.2 1.6 c-.8 .6 -1.2 1 -1.2 1.8" stroke="#3f9ae0" stroke-width="1.2"/><circle cx="3" cy="8" r="0.7" fill="#3f9ae0"/><path d="M5 6.4 h4.4 M7.6 4.4 l2 2 -2 2" stroke="#3f9ae0" stroke-width="1"/></svg>
<span class="t" style="left:653.4px;top:56.2px;font-size:9.2px;line-height:13.2px;color:#f2f2f2;transform:scaleX(0.851);">Solver</span>
<div class="r" style="left:4.2px;top:124.8px;width:69.8px;height:19.8px;background:#252525;border:1px solid #3a3a3a;border-radius:4px;"></div>
<span class="t" style="left:7.9px;top:127.9px;font-size:10.6px;line-height:14.6px;color:#f2f2f2;transform:scaleX(1.010);">B3</span>
<svg class="r" style="left:62.7px;top:133.0px;" width="7.4" height="4.8" viewBox="0 0 7.4 4.8" fill="none" stroke-linecap="round" stroke-linejoin="round"><path d="M1 1 L3.7 3.8 L6.4 1" stroke="#e0e0e0" stroke-width="1.1"/></svg>
<div class="r" style="left:80px;top:131.2px;width:1.6px;height:1.6px;background:#d0d0d0;border-radius:0.4px;"></div>
<div class="r" style="left:80px;top:134px;width:1.6px;height:1.6px;background:#d0d0d0;border-radius:0.4px;"></div>
<div class="r" style="left:80px;top:136.8px;width:1.6px;height:1.6px;background:#d0d0d0;border-radius:0.4px;"></div>
<div class="r" style="left:87.8px;top:124.8px;width:59.2px;height:19.8px;background:#252525;border:1px solid #3a3a3a;border-radius:4px;"></div>
<svg class="r" style="left:92px;top:131px;" width="9" height="9" viewBox="0 0 9 9" fill="none" stroke-linecap="round" stroke-linejoin="round"><path d="M0.8 0.8 L8.2 8.2 M8.2 0.8 L0.8 8.2" stroke="#7c7c7c" stroke-width="0.9"/></svg>
<svg class="r" style="left:107.5px;top:131px;" width="12" height="9" viewBox="0 0 12 9" fill="none" stroke-linecap="round" stroke-linejoin="round"><path d="M0.8 5 L4 8.2 L11.2 1" stroke="#7c7c7c" stroke-width="0.9"/></svg>
<span class="t" style="left:125.4px;top:127.2px;font-size:11.5px;line-height:15.5px;color:#e0e0e0;transform:scaleX(1.029);font-family:'Liberation Serif',serif;font-style:italic;">fx</span>
<svg class="r" style="left:138.5px;top:133.15px;" width="7" height="4.5" viewBox="0 0 7 4.5" fill="none" stroke-linecap="round" stroke-linejoin="round"><path d="M1 1 L3.5 3.5 L6 1" stroke="#bdbdbd" stroke-width="1"/></svg>
<div class="r" style="left:149.4px;top:124.8px;width:562.2px;height:36.6px;background:#252525;border:1px solid #383838;border-radius:4px;"></div>
<span class="t" style="left:158.0px;top:127.6px;font-size:11.2px;line-height:15.2px;color:#f2f2f2;transform:scaleX(1.042);">Delhi</span>
<svg class="r" style="left:700px;top:130.6px;" width="9" height="6" viewBox="0 0 9 6" fill="none" stroke-linecap="round" stroke-linejoin="round"><path d="M1.2 4.8 L4.5 1.4 L7.8 4.8" stroke="#d4d4d4" stroke-width="1.05"/></svg>
<div class="r" style="left:0px;top:165.6px;width:703px;height:17.4px;background:#0e0e0e;"></div>
<div class="r" style="left:22px;top:183px;width:681px;height:211px;background:#ffffff;"></div>
<div class="r" style="left:79.5px;top:183px;width:1px;height:211px;background:#f0f0f0;"></div>
<div class="r" style="left:237.5px;top:183px;width:1px;height:211px;background:#f0f0f0;"></div>
<div class="r" style="left:296.5px;top:183px;width:1px;height:211px;background:#f0f0f0;"></div>
<div class="r" style="left:445.5px;top:183px;width:1px;height:211px;background:#f0f0f0;"></div>
<div class="r" style="left:504.5px;top:183px;width:1px;height:211px;background:#f0f0f0;"></div>
<div class="r" style="left:563.0px;top:183px;width:1px;height:211px;background:#f0f0f0;"></div>
<div class="r" style="left:621.5px;top:183px;width:1px;height:211px;background:#f0f0f0;"></div>
<div class="r" style="left:680.5px;top:183px;width:1px;height:211px;background:#f0f0f0;"></div>
<div class="r" style="left:22px;top:199.5px;width:680px;height:1px;background:#f0f0f0;"></div>
<div class="r" style="left:22px;top:216.5px;width:680px;height:1px;background:#f0f0f0;"></div>
<div class="r" style="left:22px;top:233.5px;width:680px;height:1px;background:#f0f0f0;"></div>
<div class="r" style="left:22px;top:250.5px;width:680px;height:1px;background:#f0f0f0;"></div>
<div class="r" style="left:22px;top:267.5px;width:680px;height:1px;background:#f0f0f0;"></div>
<div class="r" style="left:22px;top:284.5px;width:680px;height:1px;background:#f0f0f0;"></div>
<div class="r" style="left:22px;top:301.5px;width:680px;height:1px;background:#f0f0f0;"></div>
<div class="r" style="left:22px;top:318.5px;width:680px;height:1px;background:#f0f0f0;"></div>
<div class="r" style="left:22px;top:335.5px;width:680px;height:1px;background:#f0f0f0;"></div>
<div class="r" style="left:22px;top:352.5px;width:680px;height:1px;background:#f0f0f0;"></div>
<div class="r" style="left:22px;top:369.5px;width:680px;height:1px;background:#f0f0f0;"></div>
<div class="r" style="left:22px;top:386.5px;width:680px;height:1px;background:#f0f0f0;"></div>
<span class="t" style="left:47.7px;top:167.9px;font-size:10.5px;line-height:14.5px;color:#f0f0f0;transform:scaleX(0.950);">A</span>
<div class="r" style="left:80px;top:165.6px;width:158px;height:17.4px;background:#6c6c6c;"></div>
<div class="r" style="left:80px;top:182px;width:158px;height:1px;background:#4f9466;"></div>
<span class="t" style="left:155.7px;top:167.9px;font-size:10.5px;line-height:14.5px;color:#f0f0f0;transform:scaleX(0.950);">B</span>
<span class="t" style="left:263.9px;top:167.9px;font-size:10.5px;line-height:14.5px;color:#f0f0f0;transform:scaleX(0.950);">C</span>
<span class="t" style="left:367.9px;top:167.9px;font-size:10.5px;line-height:14.5px;color:#f0f0f0;transform:scaleX(0.950);">D</span>
<span class="t" style="left:472.2px;top:167.9px;font-size:10.5px;line-height:14.5px;color:#f0f0f0;transform:scaleX(0.950);">E</span>
<span class="t" style="left:531.2px;top:167.9px;font-size:10.5px;line-height:14.5px;color:#f0f0f0;transform:scaleX(0.950);">F</span>
<span class="t" style="left:588.9px;top:167.9px;font-size:10.5px;line-height:14.5px;color:#f0f0f0;transform:scaleX(0.950);">G</span>
<span class="t" style="left:647.9px;top:167.9px;font-size:10.5px;line-height:14.5px;color:#f0f0f0;transform:scaleX(0.950);">H</span>
<div class="r" style="left:79.5px;top:167px;width:1px;height:16px;background:#2a2a2a;"></div>
<div class="r" style="left:237.5px;top:167px;width:1px;height:16px;background:#2a2a2a;"></div>
<div class="r" style="left:296.5px;top:167px;width:1px;height:16px;background:#2a2a2a;"></div>
<div class="r" style="left:445.5px;top:167px;width:1px;height:16px;background:#2a2a2a;"></div>
<div class="r" style="left:504.5px;top:167px;width:1px;height:16px;background:#2a2a2a;"></div>
<div class="r" style="left:563.0px;top:167px;width:1px;height:16px;background:#2a2a2a;"></div>
<div class="r" style="left:621.5px;top:167px;width:1px;height:16px;background:#2a2a2a;"></div>
<div class="r" style="left:680.5px;top:167px;width:1px;height:16px;background:#2a2a2a;"></div>
<svg class="r" style="left:8px;top:169.5px;" width="13" height="12" viewBox="0 0 13 12" fill="none" stroke-linecap="round" stroke-linejoin="round"><path d="M12 1 V11 H1 Z" fill="#6a6a6a"/></svg>
<div class="r" style="left:0px;top:183px;width:22px;height:211px;background:#0e0e0e;"></div>
<div class="r" style="left:0px;top:217px;width:22px;height:177px;background:#6c6c6c;"></div>
<div class="r" style="left:21px;top:217px;width:1px;height:177px;background:#86a58d;"></div>
<span class="t" style="left:7.8px;top:184.8px;font-size:10.5px;line-height:14.5px;color:#f0f0f0;transform:scaleX(0.950);">1</span>
<div class="r" style="left:0px;top:199.5px;width:22px;height:1px;background:#2a2a2a;"></div>
<span class="t" style="left:7.8px;top:201.8px;font-size:10.5px;line-height:14.5px;color:#f0f0f0;transform:scaleX(0.950);">2</span>
<div class="r" style="left:0px;top:216.5px;width:22px;height:1px;background:#7c7c7c;"></div>
<span class="t" style="left:7.8px;top:218.8px;font-size:10.5px;line-height:14.5px;color:#f0f0f0;transform:scaleX(0.950);">3</span>
<div class="r" style="left:0px;top:233.5px;width:22px;height:1px;background:#7c7c7c;"></div>
<span class="t" style="left:7.8px;top:235.8px;font-size:10.5px;line-height:14.5px;color:#f0f0f0;transform:scaleX(0.950);">4</span>
<div class="r" style="left:0px;top:250.5px;width:22px;height:1px;background:#7c7c7c;"></div>
<span class="t" style="left:7.8px;top:252.8px;font-size:10.5px;line-height:14.5px;color:#f0f0f0;transform:scaleX(0.950);">5</span>
<div class="r" style="left:0px;top:267.5px;width:22px;height:1px;background:#7c7c7c;"></div>
<span class="t" style="left:7.8px;top:269.8px;font-size:10.5px;line-height:14.5px;color:#f0f0f0;transform:scaleX(0.950);">6</span>
<div class="r" style="left:0px;top:284.5px;width:22px;height:1px;background:#7c7c7c;"></div>
<span class="t" style="left:7.8px;top:286.8px;font-size:10.5px;line-height:14.5px;color:#f0f0f0;transform:scaleX(0.950);">7</span>
<div class="r" style="left:0px;top:301.5px;width:22px;height:1px;background:#7c7c7c;"></div>
<span class="t" style="left:7.8px;top:303.8px;font-size:10.5px;line-height:14.5px;color:#f0f0f0;transform:scaleX(0.950);">8</span>
<div class="r" style="left:0px;top:318.5px;width:22px;height:1px;background:#7c7c7c;"></div>
<span class="t" style="left:7.8px;top:320.8px;font-size:10.5px;line-height:14.5px;color:#f0f0f0;transform:scaleX(0.950);">9</span>
<div class="r" style="left:0px;top:335.5px;width:22px;height:1px;background:#7c7c7c;"></div>
<span class="t" style="left:5.1px;top:337.8px;font-size:10.5px;line-height:14.5px;color:#f0f0f0;transform:scaleX(0.950);">10</span>
<div class="r" style="left:0px;top:352.5px;width:22px;height:1px;background:#7c7c7c;"></div>
<span class="t" style="left:5.4px;top:354.8px;font-size:10.5px;line-height:14.5px;color:#f0f0f0;transform:scaleX(0.950);">11</span>
<div class="r" style="left:0px;top:369.5px;width:22px;height:1px;background:#7c7c7c;"></div>
<span class="t" style="left:5.1px;top:371.8px;font-size:10.5px;line-height:14.5px;color:#f0f0f0;transform:scaleX(0.950);">12</span>
<div class="r" style="left:0px;top:386.5px;width:22px;height:1px;background:#7c7c7c;"></div>
<span class="t" style="left:5.1px;top:388.8px;font-size:10.5px;line-height:14.5px;color:#f0f0f0;transform:scaleX(0.950);">13</span>
<div class="r" style="left:80px;top:200px;width:158px;height:17px;background:#ffff00;"></div>
<span class="t" style="left:83.2px;top:201.0px;font-size:12px;line-height:16px;color:#0a0a0a;transform:scaleX(0.945);font-weight:bold;">City</span>
<div class="r" style="left:80px;top:217px;width:158px;height:17px;background:#c4eecf;"></div>
<span class="t" style="left:83.2px;top:218.0px;font-size:12px;line-height:16px;color:#0e2214;transform:scaleX(0.950);-webkit-text-stroke:0.15px #0e2214;">Delhi</span>
<div class="r" style="left:80px;top:234px;width:158px;height:17px;background:#99b99f;"></div>
<span class="t" style="left:83.2px;top:235.0px;font-size:12px;line-height:16px;color:#0e2214;transform:scaleX(0.950);-webkit-text-stroke:0.15px #0e2214;">Banglore</span>
<div class="r" style="left:80px;top:251px;width:158px;height:17px;background:#99b99f;"></div>
<span class="t" style="left:83.2px;top:252.0px;font-size:12px;line-height:16px;color:#0e2214;transform:scaleX(0.950);-webkit-text-stroke:0.15px #0e2214;">Delhi</span>
<div class="r" style="left:80px;top:268px;width:158px;height:17px;background:#99b99f;"></div>
<span class="t" style="left:83.2px;top:269.0px;font-size:12px;line-height:16px;color:#0e2214;transform:scaleX(0.950);-webkit-text-stroke:0.15px #0e2214;">Hyderabad</span>
<div class="r" style="left:80px;top:285px;width:158px;height:17px;background:#99b99f;"></div>
<span class="t" style="left:83.2px;top:286.0px;font-size:12px;line-height:16px;color:#0e2214;transform:scaleX(0.950);-webkit-text-stroke:0.15px #0e2214;">Jaipur</span>
<div class="r" style="left:80px;top:302px;width:158px;height:17px;background:#99b99f;"></div>
<span class="t" style="left:83.2px;top:303.0px;font-size:12px;line-height:16px;color:#0e2214;transform:scaleX(0.950);-webkit-text-stroke:0.15px #0e2214;">Chandigarh</span>
<div class="r" style="left:80px;top:319px;width:158px;height:17px;background:#99b99f;"></div>
<span class="t" style="left:83.2px;top:320.0px;font-size:12px;line-height:16px;color:#0e2214;transform:scaleX(0.950);-webkit-text-stroke:0.15px #0e2214;">Delhi</span>
<div class="r" style="left:80px;top:336px;width:158px;height:17px;background:#99b99f;"></div>
<span class="t" style="left:83.2px;top:337.0px;font-size:12px;line-height:16px;color:#0e2214;transform:scaleX(0.950);-webkit-text-stroke:0.15px #0e2214;">Banglore</span>
<div class="r" style="left:80px;top:353px;width:158px;height:17px;background:#99b99f;"></div>
<span class="t" style="left:83.2px;top:354.0px;font-size:12px;line-height:16px;color:#0e2214;transform:scaleX(0.950);-webkit-text-stroke:0.15px #0e2214;">Delhi</span>
<div class="r" style="left:80px;top:370px;width:158px;height:17px;background:#99b99f;"></div>
<span class="t" style="left:83.2px;top:371.0px;font-size:12px;line-height:16px;color:#0e2214;transform:scaleX(0.950);-webkit-text-stroke:0.15px #0e2214;">Hyderabad</span>
<div class="r" style="left:80px;top:387px;width:158px;height:17px;background:#99b99f;"></div>
<span class="t" style="left:83.2px;top:388.0px;font-size:12px;line-height:16px;color:#0e2214;transform:scaleX(0.950);-webkit-text-stroke:0.15px #0e2214;">Jaipur</span>
<div class="r" style="left:80px;top:199.5px;width:158.5px;height:1px;background:rgba(25,55,30,0.5);"></div>
<div class="r" style="left:80px;top:216.5px;width:158.5px;height:1px;background:rgba(25,55,30,0.5);"></div>
<div class="r" style="left:80px;top:233.5px;width:158.5px;height:1px;background:rgba(25,55,30,0.5);"></div>
<div class="r" style="left:80px;top:250.5px;width:158.5px;height:1px;background:rgba(25,55,30,0.5);"></div>
<div class="r" style="left:80px;top:267.5px;width:158.5px;height:1px;background:rgba(25,55,30,0.5);"></div>
<div class="r" style="left:80px;top:284.5px;width:158.5px;height:1px;background:rgba(25,55,30,0.5);"></div>
<div class="r" style="left:80px;top:301.5px;width:158.5px;height:1px;background:rgba(25,55,30,0.5);"></div>
<div class="r" style="left:80px;top:318.5px;width:158.5px;height:1px;background:rgba(25,55,30,0.5);"></div>
<div class="r" style="left:80px;top:335.5px;width:158.5px;height:1px;background:rgba(25,55,30,0.5);"></div>
<div class="r" style="left:80px;top:352.5px;width:158.5px;height:1px;background:rgba(25,55,30,0.5);"></div>
<div class="r" style="left:80px;top:369.5px;width:158.5px;height:1px;background:rgba(25,55,30,0.5);"></div>
<div class="r" style="left:80px;top:386.5px;width:158.5px;height:1px;background:rgba(25,55,30,0.5);"></div>
<div class="r" style="left:80px;top:403.5px;width:158.5px;height:1px;background:rgba(25,55,30,0.5);"></div>
<div class="r" style="left:79.5px;top:200px;width:1px;height:194px;background:rgba(25,55,30,0.5);"></div>
<div class="r" style="left:237.5px;top:200px;width:1px;height:194px;background:rgba(25,55,30,0.5);"></div>
<div class="r" style="left:703px;top:166.5px;width:12px;height:228px;background:#0c0c0c;"></div>
<svg class="r" style="left:706px;top:169px;" width="8" height="6" viewBox="0 0 8 6" fill="none" stroke-linecap="round" stroke-linejoin="round"><path d="M3.8 0.6 L7 5.2 H0.6 Z" fill="#a2a2a2"/></svg>
<div class="r" style="left:707px;top:178.2px;width:5.6px;height:117px;background:#a0a0a0;border-radius:2.8px;"></div>
<svg class="r" style="left:706px;top:387px;" width="8" height="6" viewBox="0 0 8 6" fill="none" stroke-linecap="round" stroke-linejoin="round"><path d="M3.8 5.2 L7 0.6 H0.6 Z" fill="#a2a2a2"/></svg>
<div class="r" style="left:0px;top:394.6px;width:715px;height:23px;background:#0b0b0b;border-radius:7px 0 0 0;"></div>
<svg class="r" style="left:14.4px;top:401px;" width="6" height="7.5" viewBox="0 0 6 7.5" fill="none" stroke-linecap="round" stroke-linejoin="round"><path d="M4.4 0.8 L1.2 3.75 L4.4 6.7" stroke="#8a8a8a" stroke-width="0.9"/></svg>
<svg class="r" style="left:36.4px;top:401px;" width="6" height="7.5" viewBox="0 0 6 7.5" fill="none" stroke-linecap="round" stroke-linejoin="round"><path d="M1.4 0.8 L4.6 3.75 L1.4 6.7" stroke="#c8c8c8" stroke-width="0.9"/></svg>
<span class="t" style="left:80.4px;top:399.5px;font-size:10.2px;line-height:14.2px;color:#f2f2f2;transform:scaleX(0.879);">Sheet1</span>
<span class="t" style="left:126.6px;top:399.5px;font-size:10.2px;line-height:14.2px;color:#f2f2f2;transform:scaleX(0.891);">Sheet2</span>
<span class="t" style="left:173.0px;top:399.5px;font-size:10.2px;line-height:14.2px;color:#f2f2f2;transform:scaleX(0.885);">Sheet3</span>
<div class="r" style="left:117.5px;top:400px;width:1px;height:12px;background:#333;"></div>
<div class="r" style="left:164px;top:400px;width:1px;height:12px;background:#333;"></div>
<div class="r" style="left:213.6px;top:394px;width:42.4px;height:19.6px;background:#ffffff;border-radius:3px 3px 4px 4px;"></div>
<span class="t" style="left:219.8px;top:397.5px;font-size:10.2px;line-height:14.2px;color:#141414;transform:scaleX(0.922);">Sheet6</span>
<div class="r" style="left:219.8px;top:410px;width:29.8px;height:1.2px;background:#2f7d4f;"></div>
<span class="t" style="left:267.4px;top:399.5px;font-size:10.2px;line-height:14.2px;color:#f2f2f2;transform:scaleX(0.897);">Sheet4</span>
<span class="t" style="left:314.2px;top:399.5px;font-size:10.2px;line-height:14.2px;color:#f2f2f2;transform:scaleX(0.891);">Sheet5</span>
<span class="t" style="left:361.0px;top:399.5px;font-size:10.2px;line-height:14.2px;color:#f2f2f2;transform:scaleX(0.827);">She</span>
<div class="r" style="left:305px;top:400px;width:1px;height:12px;background:#333;"></div>
<div class="r" style="left:351.6px;top:400px;width:1px;height:12px;background:#333;"></div>
<div class="r" style="left:384.2px;top:405.6px;width:1.5px;height:1.5px;background:#e0e0e0;"></div>
<div class="r" style="left:386.6px;top:405.6px;width:1.5px;height:1.5px;background:#e0e0e0;"></div>
<div class="r" style="left:389px;top:405.6px;width:1.5px;height:1.5px;background:#e0e0e0;"></div>
<svg class="r" style="left:405.6px;top:400.4px;" width="9" height="9" viewBox="0 0 9 9" fill="none" stroke-linecap="round" stroke-linejoin="round"><path d="M4.5 0.8 V8.2 M0.8 4.5 H8.2" stroke="#b4b4b4" stroke-width="0.9"/></svg>
<div class="r" style="left:431px;top:403.4px;width:1.3px;height:1.3px;background:#d0d0d0;"></div>
<div class="r" style="left:431px;top:406px;width:1.3px;height:1.3px;background:#d0d0d0;"></div>
<div class="r" style="left:431px;top:408.6px;width:1.3px;height:1.3px;background:#d0d0d0;"></div>
<div class="r" style="left:443px;top:399.6px;width:261.5px;height:13px;background:#1c1c1c;border-radius:6.5px;"></div>
<svg class="r" style="left:447px;top:402.8px;" width="5" height="6.4" viewBox="0 0 5 6.4" fill="none" stroke-linecap="round" stroke-linejoin="round"><path d="M4.4 0.4 V6 L0.6 3.2 Z" fill="#a8a8a8"/></svg>
<div class="r" style="left:455.4px;top:402.6px;width:222.8px;height:6.2px;background:#a0a0a0;border-radius:3.1px;"></div>
<svg class="r" style="left:695.8px;top:402.8px;" width="5" height="6.4" viewBox="0 0 5 6.4" fill="none" stroke-linecap="round" stroke-linejoin="round"><path d="M0.6 0.4 V6 L4.4 3.2 Z" fill="#a8a8a8"/></svg>
<div class="r" style="left:0px;top:416.8px;width:715px;height:13.2px;background:#1d1d1d;"></div>
<span class="t" style="left:6.7px;top:418.8px;font-size:7.6px;line-height:11.6px;color:#e2e2e2;transform:scaleX(0.879);">Ready</span>
<svg class="r" style="left:39px;top:419.5px;" width="11" height="9" viewBox="0 0 11 9" fill="none" stroke-linecap="round" stroke-linejoin="round"><rect x="0.6" y="0.6" width="9" height="7" stroke="#d0d0d0" stroke-width="0.9"/><path d="M0.6 2.6 h9" stroke="#d0d0d0" stroke-width="0.8"/><circle cx="7" cy="6" r="2.2" fill="#1b1b1b" stroke="#d0d0d0" stroke-width="0.8"/><circle cx="7" cy="6" r="0.7" fill="#d0d0d0"/></svg>
<svg class="r" style="left:59.6px;top:419px;" width="10" height="10" viewBox="0 0 10 10" fill="none" stroke-linecap="round" stroke-linejoin="round"><circle cx="5" cy="1.8" r="1.1" fill="none" stroke="#d6d6d6" stroke-width="0.8"/><path d="M0.8 3.6 L5 4.6 L9.2 3.6 M5 4.6 V6.6 M5 6.6 L2.6 9.6 M5 6.6 L7.4 9.6" stroke="#d6d6d6" stroke-width="0.9"/><path d="M2.2 6.2 l-1.4 1.2 M7.8 6.2 l1.4 1.2" stroke="#d6d6d6" stroke-width="0.6"/></svg>
<span class="t" style="left:72.4px;top:418.8px;font-size:7.6px;line-height:11.6px;color:#f0f0f0;transform:scaleX(0.949);font-weight:bold;">Accessibility: Investigate</span>
<span class="t" style="left:461.8px;top:418.8px;font-size:7.6px;line-height:11.6px;color:#d6d6d6;transform:scaleX(0.935);">Count: 17</span>
<div class="r" style="left:506px;top:416.8px;width:26px;height:13.2px;background:#303030;"></div>
<svg class="r" style="left:514px;top:419.4px;" width="10" height="9" viewBox="0 0 10 9" fill="none" stroke-linecap="round" stroke-linejoin="round"><rect x="0.6" y="0.6" width="8.6" height="7.8" stroke="#e0e0e0" stroke-width="0.9"/><path d="M0.6 3.2 h8.6 M0.6 5.8 h8.6 M3.4 0.6 v7.8 M6.4 0.6 v7.8" stroke="#e0e0e0" stroke-width="0.8"/></svg>
<svg class="r" style="left:541.6px;top:419.4px;" width="10" height="9" viewBox="0 0 10 9" fill="none" stroke-linecap="round" stroke-linejoin="round"><rect x="0.6" y="0.6" width="8.6" height="7.8" stroke="#d0d0d0" stroke-width="0.9"/><rect x="2.6" y="2.4" width="4.6" height="4.2" stroke="#d0d0d0" stroke-width="0.8"/></svg>
<svg class="r" style="left:569px;top:419.4px;" width="10" height="9" viewBox="0 0 10 9" fill="none" stroke-linecap="round" stroke-linejoin="round"><path d="M0.6 0.6 h8.6 v7.8 h-8.6 z M3.2 0.6 v4.4 h3.4 v-4.4" stroke="#d0d0d0" stroke-width="0.9"/></svg>
<div class="r" style="left:590.8px;top:423.8px;width:4.4px;height:0.9px;background:#c8c8c8;"></div>
<div class="r" style="left:600.4px;top:423.9px;width:67.6px;height:0.8px;background:#9a9a9a;"></div>
<div class="r" style="left:632.4px;top:420.2px;width:2.6px;height:8px;background:#c8c8c8;"></div>
<svg class="r" style="left:671.4px;top:421.6px;" width="6" height="6" viewBox="0 0 6 6" fill="none" stroke-linecap="round" stroke-linejoin="round"><path d="M3 0.6 V5.4 M0.6 3 H5.4" stroke="#c8c8c8" stroke-width="0.9"/></svg>
<span class="t" style="left:685.6px;top:418.8px;font-size:7.6px;line-height:11.6px;color:#d6d6d6;transform:scaleX(0.947);">100%</span>
</body></html>
